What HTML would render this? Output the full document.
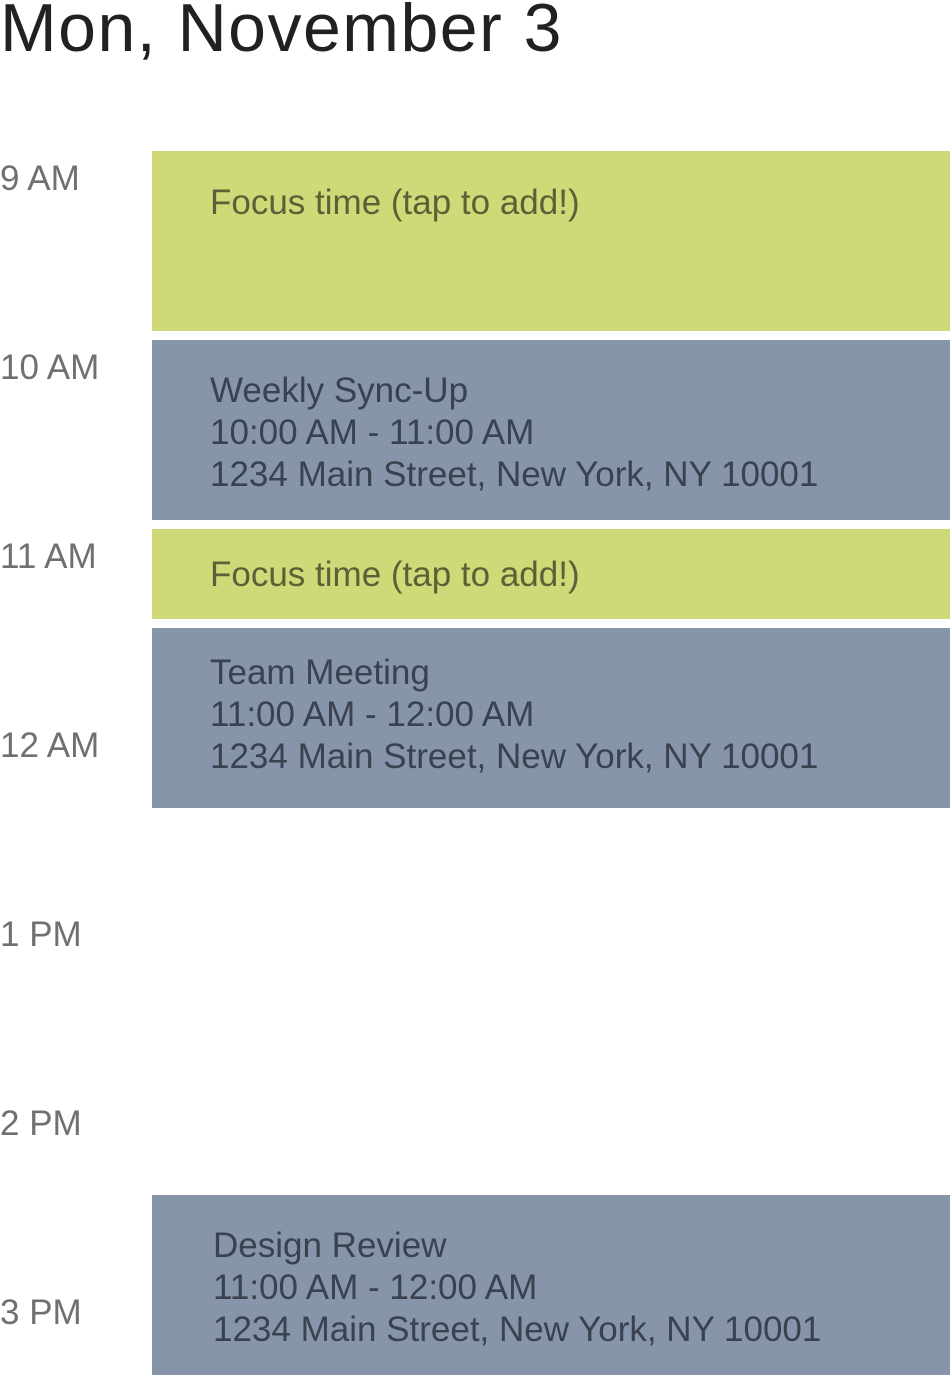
<!DOCTYPE html>
<html><head><meta charset="utf-8"><style>
html,body{margin:0;padding:0;background:#fff;width:950px;height:1375px;overflow:hidden;position:relative;font-family:"Liberation Sans",Arial,sans-serif}
.t{position:absolute;left:0;top:-12px;font-size:68px;line-height:80px;color:#212121;white-space:nowrap;letter-spacing:1.5px}
.l{position:absolute;left:0;font-size:35px;line-height:42px;color:#707070;white-space:nowrap}
.b{position:absolute;left:152px;width:798px}
.g{background:#cfd978}
.u{background:#8795ab}
.x{position:absolute;left:210px;font-size:35px;line-height:42px;white-space:nowrap}
.gx{color:#5b6136}
.ux{color:#3a414f}
</style></head><body>
<div class="t">Mon, November 3</div>
<div class="l" style="top:158px">9 AM</div>
<div class="l" style="top:347px">10 AM</div>
<div class="l" style="top:536px">11 AM</div>
<div class="l" style="top:725px">12 AM</div>
<div class="l" style="top:914px">1 PM</div>
<div class="l" style="top:1103px">2 PM</div>
<div class="l" style="top:1292px">3 PM</div>

<div class="b g" style="top:151px;height:180px"></div>
<div class="b u" style="top:340px;height:180px"></div>
<div class="b g" style="top:529px;height:90px"></div>
<div class="b u" style="top:628px;height:180px"></div>
<div class="b u" style="top:1195px;height:180px"></div>

<div class="x gx" style="top:182px">Focus time (tap to add!)</div>
<div class="x ux" style="top:370px">Weekly Sync-Up<br>10:00 AM - 11:00 AM<br>1234 Main Street, New York, NY 10001</div>
<div class="x gx" style="top:554px">Focus time (tap to add!)</div>
<div class="x ux" style="top:652px">Team Meeting<br>11:00 AM - 12:00 AM<br>1234 Main Street, New York, NY 10001</div>
<div class="x ux" style="top:1225px;left:213px">Design Review<br>11:00 AM - 12:00 AM<br>1234 Main Street, New York, NY 10001</div>
</body></html>
